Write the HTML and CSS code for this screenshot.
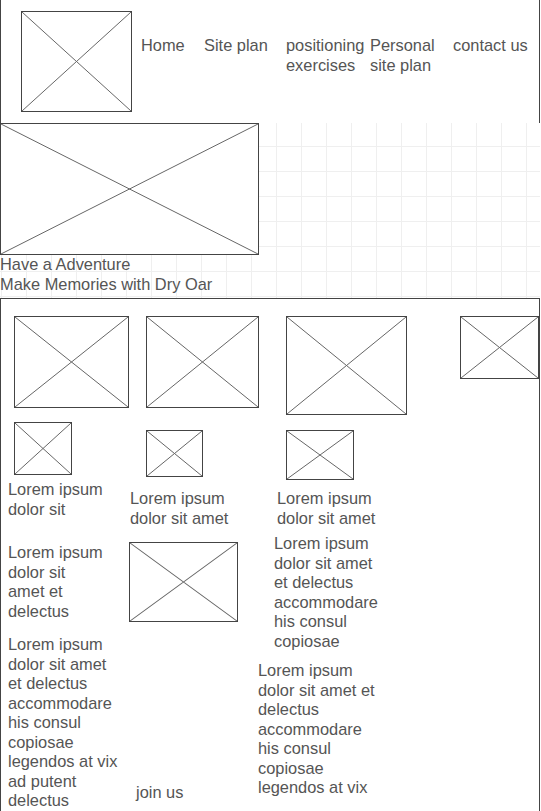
FILE: index.html
```html
<!DOCTYPE html>
<html lang="en">

<head>
    <meta charset="UTF-8">
    <meta name="viewport" content="width=device-width, initial-scale=1.0">
    <title>Dry Oar</title>
    <link rel="stylesheet" href="styles.css">
</head>

<body>
    <div class="header">
        <div class="ph logo"><svg viewBox="0 0 10 10" preserveAspectRatio="none"><path d="M0 0L10 10M10 0L0 10"/></svg></div>
        <div class="nav">
            <a href="#">Home</a>
            <a href="#">Site plan</a>
            <a href="#">positioning exercises</a>
            <a href="#">Personal site plan</a>
            <a href="#">contact us</a>
        </div>
    </div>

    <div class="hero">
        <div class="ph hero-img"><svg viewBox="0 0 10 10" preserveAspectRatio="none"><path d="M0 0L10 10M10 0L0 10"/></svg></div>
        <p class="hero-text">Have a Adventure<br>Make Memories with Dry Oar</p>
    </div>

    <div class="main">
        <!-- 第一列 -->
        <div class="col col-a">
            <div class="ph a-big"><svg viewBox="0 0 10 10" preserveAspectRatio="none"><path d="M0 0L10 10M10 0L0 10"/></svg></div>
            <div class="ph a-small"><svg viewBox="0 0 10 10" preserveAspectRatio="none"><path d="M0 0L10 10M10 0L0 10"/></svg></div>
            <p class="txt a-t1">Lorem ipsum dolor sit</p>
            <p class="txt a-t2">Lorem ipsum dolor sit amet et delectus</p>
            <p class="txt a-t3">Lorem ipsum dolor sit amet et delectus accommodare his consul copiosae legendos at vix ad putent delectus</p>
        </div>
        <!-- 第二列 -->
        <div class="col col-b">
            <div class="ph b-big"><svg viewBox="0 0 10 10" preserveAspectRatio="none"><path d="M0 0L10 10M10 0L0 10"/></svg></div>
            <div class="ph b-small"><svg viewBox="0 0 10 10" preserveAspectRatio="none"><path d="M0 0L10 10M10 0L0 10"/></svg></div>
            <p class="txt b-t1">Lorem ipsum dolor sit amet</p>
            <div class="ph b-mid"><svg viewBox="0 0 10 10" preserveAspectRatio="none"><path d="M0 0L10 10M10 0L0 10"/></svg></div>
            <p class="txt b-join">join us</p>
        </div>
        <!-- 第三列 -->
        <div class="col col-c">
            <div class="ph c-big"><svg viewBox="0 0 10 10" preserveAspectRatio="none"><path d="M0 0L10 10M10 0L0 10"/></svg></div>
            <div class="ph c-small"><svg viewBox="0 0 10 10" preserveAspectRatio="none"><path d="M0 0L10 10M10 0L0 10"/></svg></div>
            <p class="txt c-t1">Lorem ipsum dolor sit amet</p>
            <p class="txt c-t2">Lorem ipsum dolor sit amet et delectus accommodare his consul copiosae</p>
            <p class="txt c-t3">Lorem ipsum dolor sit amet et delectus accommodare his consul copiosae legendos at vix</p>
        </div>
        <!-- 第四列 -->
        <div class="col col-d">
            <div class="ph d-img"><svg viewBox="0 0 10 10" preserveAspectRatio="none"><path d="M0 0L10 10M10 0L0 10"/></svg></div>
        </div>
    </div>
</body>

</html>
```

FILE: styles.css
```css
body {
    margin: 0;
    font-family: "Liberation Sans", Arial, sans-serif;
    font-size: 16.4px;
    line-height: 19.5px;
    color: #555;
    background: #fff;
}

p {
    margin: 0;
}

/* 占位图 */
.ph {
    box-sizing: border-box;
    border: 1px solid #444;
    background: #fff;
}

.ph svg {
    display: block;
    width: 100%;
    height: 100%;
}

.ph path {
    fill: none;
    stroke: #666;
    stroke-width: 1;
    vector-effect: non-scaling-stroke;
}

/* 头部 */
.header {
    display: flex;
    align-items: flex-start;
    width: 540px;
    height: 124px;
    box-sizing: border-box;
    border: 1px solid #444;
    border-top: none;
}

.logo {
    width: 111px;
    height: 101px;
    margin: 11px 0 0 20px;
}

.nav {
    display: grid;
    grid-template-columns: 63px 82px 84px 83px auto;
    margin-left: 9px;
    padding-top: 36px;
}

.nav a {
    color: #555;
    text-decoration: none;
}

/* 大图区域 */
.hero {
    width: 540px;
    height: 175px;
    background-color: #fff;
    background-image: linear-gradient(#efefef 1px, transparent 1px),
        linear-gradient(90deg, #efefef 1px, transparent 1px);
    background-size: 25px 25px;
    background-position: 1px 23px;
}

.hero-img {
    width: 259px;
    height: 132px;
    margin-top: -1px;
}

/* 内容区域 */
.main {
    display: flex;
    width: 540px;
    box-sizing: border-box;
    border: 1px solid #444;
    padding-bottom: 30px;
}

.col {
    display: flex;
    flex-direction: column;
    align-items: flex-start;
}

.col-a {
    width: 128px;
}

.col-b {
    width: 128px;
}

.col-c {
    width: 204px;
}

.col-d {
    flex: 1;
}

.a-big {
    width: 115px;
    height: 92px;
    margin: 17px 0 0 13px;
}

.a-small {
    width: 58px;
    height: 53px;
    margin: 14px 0 0 13px;
}

.a-t1 {
    width: 112px;
    margin: 5px 0 0 7px;
}

.a-t2 {
    width: 97px;
    margin: 24px 0 0 7px;
}

.a-t3 {
    width: 113px;
    margin: 14px 0 0 7px;
}

.b-big {
    width: 113px;
    height: 92px;
    margin: 17px 0 0 17px;
}

.b-small {
    width: 57px;
    height: 47px;
    margin: 22px 0 0 17px;
}

.b-t1 {
    width: 112px;
    margin: 12px 0 0 1px;
}

.b-mid {
    width: 109px;
    height: 80px;
    margin-top: 14px;
}

.b-join {
    margin: 161px 0 0 7px;
}

.c-big {
    width: 121px;
    height: 99px;
    margin: 17px 0 0 29px;
}

.c-small {
    width: 68px;
    height: 50px;
    margin: 15px 0 0 29px;
}

.c-t1 {
    width: 112px;
    margin: 9px 0 0 20px;
}

.c-t2 {
    width: 108px;
    margin: 6px 0 0 17px;
}

.c-t3 {
    width: 122px;
    margin: 10px 0 0 1px;
}

.d-img {
    width: 79px;
    height: 63px;
    margin-top: 17px;
}
```
